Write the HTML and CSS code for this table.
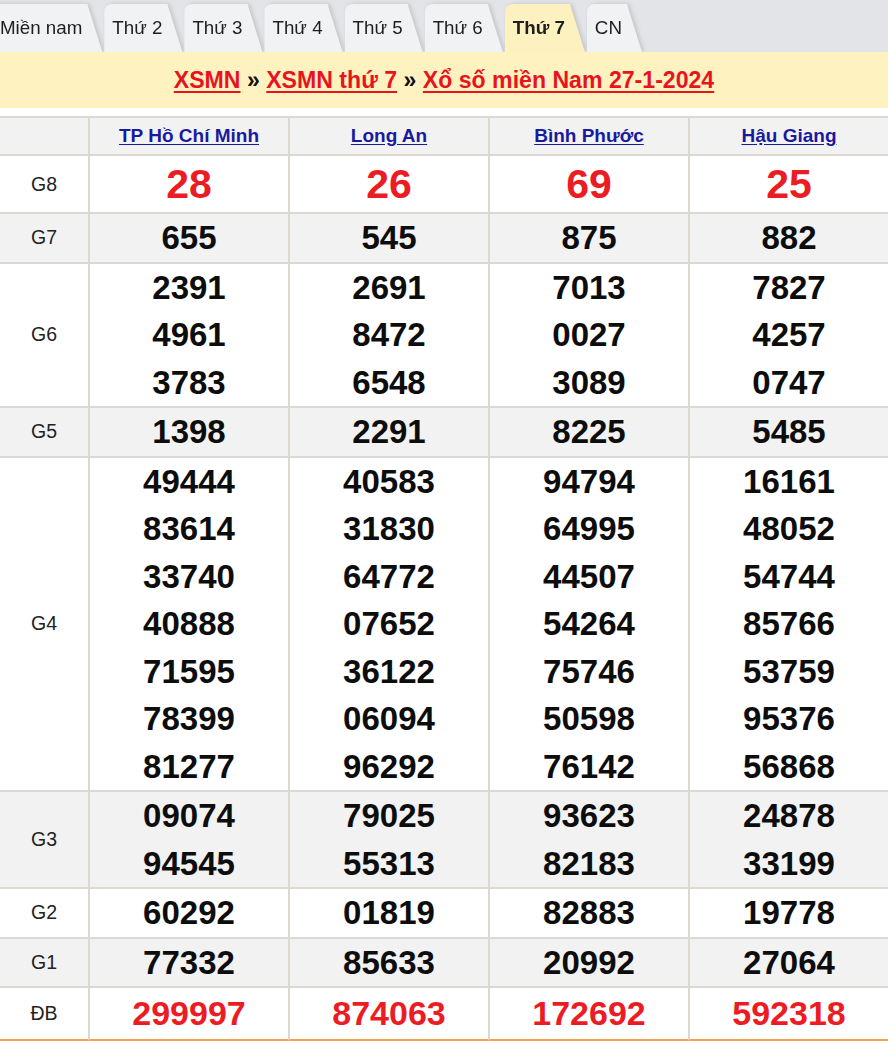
FILE: index.html
```html
<!DOCTYPE html>
<html lang="vi">
<head>
<meta charset="utf-8">
<title>XSMN thứ 7</title>
<link rel="stylesheet" href="styles.css">
</head>
<body>
<nav class="tabs">
  <div class="tab-wrap first"><a class="tab">Miền nam</a></div>
  <div class="tab-wrap"><a class="tab">Thứ 2</a></div>
  <div class="tab-wrap"><a class="tab">Thứ 3</a></div>
  <div class="tab-wrap"><a class="tab">Thứ 4</a></div>
  <div class="tab-wrap"><a class="tab">Thứ 5</a></div>
  <div class="tab-wrap"><a class="tab">Thứ 6</a></div>
  <div class="tab-wrap"><a class="tab active">Thứ 7</a></div>
  <div class="tab-wrap"><a class="tab">CN</a></div>
</nav>
<h2 class="title"><a href="#">XSMN</a> » <a href="#">XSMN thứ 7</a> » <a href="#">Xổ số miền Nam 27-1-2024</a></h2>
<table class="results">
  <thead>
    <tr class="grey">
      <th class="label-col"></th>
      <th class="prov-col"><a href="#">TP Hồ Chí Minh</a></th>
      <th class="prov-col"><a href="#">Long An</a></th>
      <th class="prov-col"><a href="#">Bình Phước</a></th>
      <th><a href="#">Hậu Giang</a></th>
    </tr>
  </thead>
  <tbody>
    <tr class="g8">
      <td class="label">G8</td>
      <td><div class="n">28</div></td>
      <td><div class="n">26</div></td>
      <td><div class="n">69</div></td>
      <td><div class="n">25</div></td>
    </tr>
    <tr class="grey">
      <td class="label">G7</td>
      <td><div class="n">655</div></td>
      <td><div class="n">545</div></td>
      <td><div class="n">875</div></td>
      <td><div class="n">882</div></td>
    </tr>
    <tr>
      <td class="label">G6</td>
      <td><div class="n">2391</div><div class="n">4961</div><div class="n">3783</div></td>
      <td><div class="n">2691</div><div class="n">8472</div><div class="n">6548</div></td>
      <td><div class="n">7013</div><div class="n">0027</div><div class="n">3089</div></td>
      <td><div class="n">7827</div><div class="n">4257</div><div class="n">0747</div></td>
    </tr>
    <tr class="grey">
      <td class="label">G5</td>
      <td><div class="n">1398</div></td>
      <td><div class="n">2291</div></td>
      <td><div class="n">8225</div></td>
      <td><div class="n">5485</div></td>
    </tr>
    <tr>
      <td class="label">G4</td>
      <td><div class="n">49444</div><div class="n">83614</div><div class="n">33740</div><div class="n">40888</div><div class="n">71595</div><div class="n">78399</div><div class="n">81277</div></td>
      <td><div class="n">40583</div><div class="n">31830</div><div class="n">64772</div><div class="n">07652</div><div class="n">36122</div><div class="n">06094</div><div class="n">96292</div></td>
      <td><div class="n">94794</div><div class="n">64995</div><div class="n">44507</div><div class="n">54264</div><div class="n">75746</div><div class="n">50598</div><div class="n">76142</div></td>
      <td><div class="n">16161</div><div class="n">48052</div><div class="n">54744</div><div class="n">85766</div><div class="n">53759</div><div class="n">95376</div><div class="n">56868</div></td>
    </tr>
    <tr class="grey">
      <td class="label">G3</td>
      <td><div class="n">09074</div><div class="n">94545</div></td>
      <td><div class="n">79025</div><div class="n">55313</div></td>
      <td><div class="n">93623</div><div class="n">82183</div></td>
      <td><div class="n">24878</div><div class="n">33199</div></td>
    </tr>
    <tr>
      <td class="label">G2</td>
      <td><div class="n">60292</div></td>
      <td><div class="n">01819</div></td>
      <td><div class="n">82883</div></td>
      <td><div class="n">19778</div></td>
    </tr>
    <tr class="grey">
      <td class="label">G1</td>
      <td><div class="n">77332</div></td>
      <td><div class="n">85633</div></td>
      <td><div class="n">20992</div></td>
      <td><div class="n">27064</div></td>
    </tr>
    <tr class="db">
      <td class="label">ĐB</td>
      <td><div class="n">299997</div></td>
      <td><div class="n">874063</div></td>
      <td><div class="n">172692</div></td>
      <td><div class="n">592318</div></td>
    </tr>
  </tbody>
</table>
</body>
</html>
```

FILE: styles.css
```css
html, body {
  margin: 0;
  padding: 0;
  background: #ffffff;
  font-family: "Liberation Sans", Arial, sans-serif;
  color: #222;
}

.tabs {
  display: flex;
  align-items: flex-end;
  height: 52px;
  background: #e3e4e7;
  overflow: hidden;
}

.tab-wrap {
  margin-right: 2px;
  filter: drop-shadow(2px 0 2px rgba(0, 0, 0, 0.14));
}

.tab-wrap.first {
  margin-left: -8px;
}

.tab {
  display: block;
  height: 48px;
  line-height: 48px;
  padding: 0 20px 0 8px;
  background: #f1f2f4;
  border-radius: 8px 8px 0 0;
  clip-path: polygon(0 0, calc(100% - 15px) 0, 100% 100%, 0 100%);
  font-size: 18.75px;
  color: #1e1e1e;
  text-decoration: none;
  white-space: nowrap;
}

.tab.active {
  background: #fdf1bf;
  font-weight: bold;
}

.title {
  margin: 0 0 8px;
  height: 56px;
  line-height: 56px;
  background: #fff2c1;
  text-align: center;
  font-size: 23.1px;
  font-weight: bold;
  color: #111;
}

.title a {
  color: #e8141d;
  text-decoration: underline;
  text-decoration-thickness: 2px;
  text-underline-offset: 3px;
}

.results {
  width: 888px;
  table-layout: fixed;
  border-collapse: separate;
  border-spacing: 0;
  border-top: 2px solid #ddd9d2;
}

.results th,
.results td {
  box-sizing: border-box;
  padding: 0;
  text-align: center;
  vertical-align: middle;
  border-right: 2px solid #ddd9d2;
  border-bottom: 2px solid #ddd9d2;
}

.results th:last-child,
.results td:last-child {
  border-right: none;
}

.results .label-col {
  width: 90px;
}

.results .prov-col {
  width: 200px;
}

.results th {
  height: 38px;
  line-height: 36px;
  font-size: 19px;
  font-weight: bold;
}

.results th a {
  color: #1a1a9e;
  text-decoration: underline;
  text-underline-offset: 2px;
}

.grey th,
.grey td {
  background: #f2f2f2;
}

.label {
  font-size: 19.5px;
  color: #222;
}

.n {
  font-size: 33px;
  font-weight: bold;
  line-height: 47.5px;
  color: #0d0d0d;
}

.g8 .n {
  font-size: 41px;
  line-height: 56px;
  color: #ec1c24;
}

.db td {
  border-bottom: 2px solid #f4a24c;
}

.db .n {
  font-size: 34px;
  line-height: 51px;
  color: #ec1c24;
}
```
